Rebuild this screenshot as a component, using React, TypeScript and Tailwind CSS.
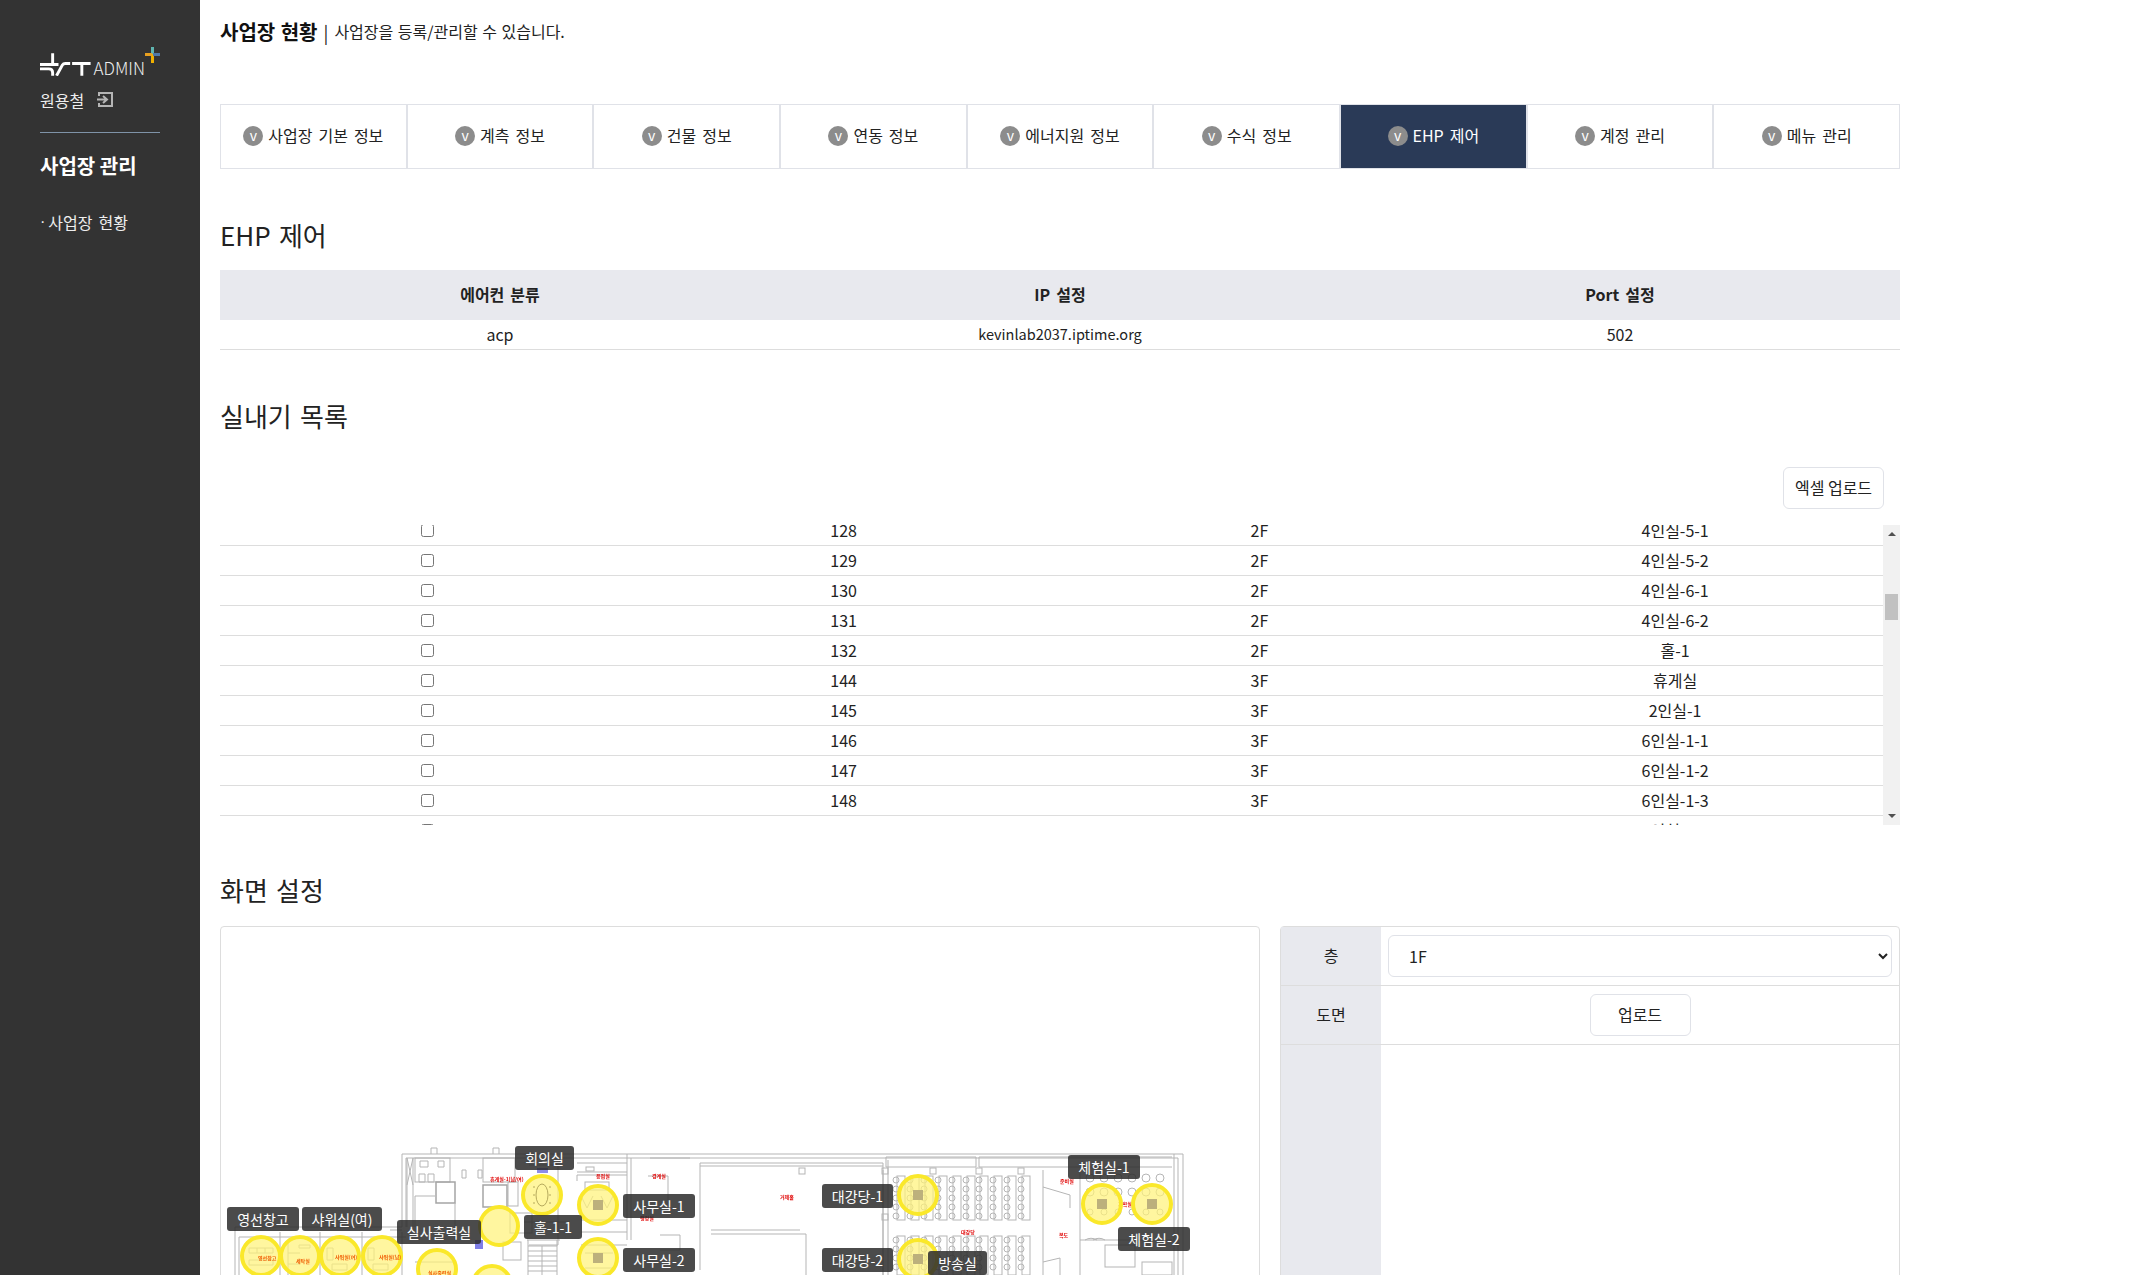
const font = "font-['Noto_Sans_CJK_KR',sans-serif]";

const tabs = ["사업장 기본 정보", "계측 정보", "건물 정보", "연동 정보", "에너지원 정보", "수식 정보", "EHP 제어", "계정 관리", "메뉴 관리"];

const rows = [
  ["128", "2F", "4인실-5-1"],
  ["129", "2F", "4인실-5-2"],
  ["130", "2F", "4인실-6-1"],
  ["131", "2F", "4인실-6-2"],
  ["132", "2F", "홀-1"],
  ["144", "3F", "휴게실"],
  ["145", "3F", "2인실-1"],
  ["146", "3F", "6인실-1-1"],
  ["147", "3F", "6인실-1-2"],
  ["148", "3F", "6인실-1-3"],
  ["149", "3F", "6인실-2-1"],
];

// plan coordinates are page pixels, the svg viewBox starts at the panel corner
const labels = [
  { t: "영선창고", x: 227, y: 1208, w: 72 },
  { t: "샤워실(여)", x: 302, y: 1208, w: 80 },
  { t: "실사출력실", x: 397, y: 1221, w: 84 },
  { t: "회의실", x: 515, y: 1147, w: 59 },
  { t: "홀-1-1", x: 524, y: 1216, w: 58 },
  { t: "사무실-1", x: 623, y: 1195, w: 72 },
  { t: "사무실-2", x: 623, y: 1249, w: 72 },
  { t: "대강당-1", x: 822, y: 1185, w: 71 },
  { t: "대강당-2", x: 822, y: 1249, w: 71 },
  { t: "방송실", x: 928, y: 1252, w: 59 },
  { t: "체험실-1", x: 1068, y: 1156, w: 72 },
  { t: "체험실-2", x: 1118, y: 1228, w: 72 },
];

const spots = [
  [542, 1195], [598, 1205], [499, 1226], [598, 1258], [261, 1256], [300, 1256], [340, 1256], [382, 1256],
  [437, 1269], [492, 1285], [918, 1195], [918, 1259], [1102, 1204], [1152, 1204],
];
const squares = [[598, 1205], [598, 1258], [918, 1195], [918, 1259], [1102, 1204], [1152, 1204]];

const seatCols = [897, 911, 925, 939, 953, 967, 980, 994, 1008, 1022];

function Plan() {
  return (
    <svg className="absolute left-0 top-0 blur-[0.4px]" width="1040" height="348" viewBox="221 927 1040 348" fill="none">
      <g stroke="#b5b5b5" strokeWidth="1">
        {/* outer walls */}
        <path d="M402 1227V1154H1183V1275M406 1227V1158H1178V1275M235 1275V1227H402M239 1275V1237H406" />
        <path d="M1174 1154V1275M627 1154V1240M631 1158V1240M390 1230H402" />
        {/* wc and stairs block, left */}
        <path d="M407 1158V1227M413 1158V1227M407 1158L413 1185M413 1158L407 1185" />
        <rect x="415" y="1158" width="35" height="24" />
        <rect x="436" y="1182" width="19" height="21" strokeWidth="1.5" stroke="#a5a5a5" />
        <path d="M415 1196H435M415 1196V1227M455 1203V1240M431 1154v-6h6v6M493 1154v-6h6v6" />
        <path d="M420 1161h8v6h-8zM438 1161h6v6h-6zM419 1174h6v8h-6zM428 1174h6v8h-6z" />
        <rect x="483" y="1158" width="32" height="24" />
        <rect x="483" y="1185" width="24" height="22" strokeWidth="1.5" stroke="#a5a5a5" />
        <rect x="508" y="1182" width="10" height="24" />
        <path d="M462 1170v8h4v-8zM478 1170v8h4v-8z" />
        <path d="M529 1165H558V1245H529M524 1222H570M527 1240H560" />
        <path d="M528 1240V1275M557 1240V1275M542 1246V1275M528 1246H557M528 1251H557M528 1256H557M528 1261H557M528 1266H557M528 1271H557" />
        <rect x="503" y="1242" width="18" height="18" />
        <rect x="510" y="1213" width="22" height="20" />
        {/* office */}
        <path d="M577 1163H627M577 1172H627M577 1181V1175H627M581 1220H627M581 1232H627M581 1245H627" />
        <rect x="585" y="1182" width="24" height="8" />
        <rect x="586" y="1167" width="8" height="4" />
        <path d="M581 1196l6 12 6-12M601 1196l6 12 6-12M585 1253h28M585 1268h28" />
        <path d="M650 1158H690M648 1176H668V1200M660 1235H680V1250M660 1250H680" />
        {/* lecture hall */}
        <path d="M700 1163H883V1300M700 1166H883M700 1163V1270M711 1230H800M711 1234H806V1275M883 1170V1275M888 1160V1275" />
        <path d="M886 1157H976M979 1157H1172M886 1167H976M979 1167H1172M886 1157V1167M976 1157V1167M979 1157V1167" />
        <rect x="799" y="1168" width="6" height="6" />
        <rect x="882" y="1168" width="6" height="6" />
        <rect x="882" y="1214" width="6" height="6" />
        <rect x="930" y="1168" width="6" height="6" />
        <rect x="976" y="1168" width="6" height="6" />
        <rect x="1018" y="1168" width="6" height="6" />
        <path d="M1043 1170V1275M1080 1170V1275M1043 1187L1070 1195V1208M1080 1240H1172M1043 1262L1060 1258V1275" />
        <path d="M1085 1240a12 12 0 0 1 12 0M1105 1240a12 12 0 0 0-12 0" />
        <rect x="1105" y="1245" width="30" height="22" />
        <rect x="1142" y="1262" width="30" height="13" />
        {seatCols.map((x) => (
          <g key={x}>
            <rect x={x} y="1176" width="8" height="44" />
            <rect x={x} y="1236" width="8" height="39" />
            {[1180, 1189, 1198, 1207, 1216, 1240, 1249, 1258, 1267].map((y) => (
              <circle key={y} cx={x - 1} cy={y} r="3" />
            ))}
          </g>
        ))}
        {[1090, 1104, 1118, 1132, 1146, 1160].map((x) => (
          <g key={x}>
            <circle cx={x} cy="1178" r="4" />
            <circle cx={x} cy="1192" r="4" />
            <circle cx={x} cy="1212" r="3" />
          </g>
        ))}
        {/* lower left rooms */}
        <path d="M280 1232V1275M320 1232V1275M362 1232V1275M402 1232V1275M415 1262H455" />
        <path d="M249 1248h24v5h-24zM249 1260h24v5h-24zM257 1248v5M265 1248v5M299 1245h11v3h-11zM288 1240v35M288 1253h12M288 1264h12" />
        <path d="M327 1248h6v12h-6zM332 1264h15v6h-15zM368 1248h6v12h-6zM373 1264h15v6h-15z" />
      </g>
      <rect x="537" y="1168" width="11" height="5" fill="#5c5ce0" opacity="0.7" />
      <rect x="475" y="1240" width="8" height="9" fill="#5c5ce0" opacity="0.8" />
      <g fill="#e00000" fontSize="5" fontWeight="700">
        <text x="490" y="1181">휴게실-1(남/여)</text>
        <text x="596" y="1178">응접실</text>
        <text x="652" y="1178">경계실</text>
        <text x="780" y="1199">거제홀</text>
        <text x="961" y="1234">대강당</text>
        <text x="1060" y="1183">준비실</text>
        <text x="1059" y="1237">복도</text>
        <text x="1118" y="1206">기획실</text>
        <text x="640" y="1220">행정실</text>
      </g>
      {spots.map(([x, y]) => (
        <circle key={`${x}-${y}`} cx={x} cy={y} r="19" fill="#fff27a" fillOpacity="0.72" stroke="#fae82a" strokeWidth="4" />
      ))}
      {squares.map(([x, y]) => (
        <rect key={`${x}-${y}`} x={x - 5} y={y - 5} width="10" height="10" fill="#bcb07c" />
      ))}
      <g stroke="#b5a95c" strokeWidth="1">
        <ellipse cx="542" cy="1195" rx="6" ry="11" />
        <path d="M533 1187h2M533 1195h2M533 1203h2M549 1187h2M549 1195h2M549 1203h2" />
      </g>
      <g fill="#f05a00" fontSize="5" fontWeight="700">
        <text x="258" y="1260">영선창고</text>
        <text x="296" y="1263">세탁실</text>
        <text x="335" y="1259">샤워실(여)</text>
        <text x="379" y="1259">샤워실(남)</text>
        <text x="428" y="1275">실사출력실</text>
      </g>
    </svg>
  );
}

function Heading({ children, className }: { children: React.ReactNode; className: string }) {
  return <h2 className={`text-[26px] leading-[32px] text-[#222] ${className}`}>{children}</h2>;
}

export default function App() {
  return (
    <div className={`flex h-[1275px] w-[2134px] overflow-hidden bg-white text-[#222] [word-spacing:0.15em] ${font}`}>
      <aside className="flex w-[200px] shrink-0 flex-col bg-[#333333] px-10 pt-[47px] text-white">
        <div className="flex h-[29px] items-end">
          <svg width="54" height="24" viewBox="0 0 54 24" fill="none" stroke="#fff" strokeWidth="3">
            <path d="M0 12.5H19M13 1V12.5M0 17H9Q13 17 13 21V24M17 24L23 13Q24 11.5 26 11.5H31M33 11.5H52M43 11.5V24" />
          </svg>
          <span className="-mb-[2px] ml-[1px] text-[17px] font-light leading-[20px] text-[#eee]">ADMIN</span>
          <svg className="mb-[13px] shrink-0" width="15" height="16" viewBox="0 0 15 16" strokeWidth="3" fill="none">
            <path d="M7.5 0V7" stroke="#5fb5b0" />
            <path d="M7.5 7V16" stroke="#f0b000" />
            <path d="M0 7.5H7" stroke="#e8a020" />
            <path d="M8 7.5H15" stroke="#4f78a8" />
          </svg>
        </div>
        <div className="mt-[12px] flex h-[24px] items-center gap-[13px] pb-[1px] text-[16px] text-[#eee]">
          원용철
          <svg width="16" height="15" viewBox="0 0 16 15" fill="none" stroke="#b5b5b5" strokeWidth="2">
            <path d="M2 4V1H15V14H2V11M0 7.5H9M6 4l4 3.5-4 3.5" />
          </svg>
        </div>
        <div className="mt-[20px] h-px w-[120px] bg-[#7f93a8]" />
        <div className="mt-[19px] text-[20px] font-bold leading-[28px] [word-spacing:0]">사업장 관리</div>
        <div className="mt-[30px] flex text-[16px] leading-[24px] text-[#eee]">
          <span className="mr-[3px] font-['Liberation_Sans',sans-serif]">·</span>
          사업장 현황
        </div>
      </aside>

      <main className="w-[1680px] shrink-0 pl-[20px] box-content">
        <div className="flex h-[63px] items-start pt-[18px] leading-[28px] [word-spacing:0.06em]">
          <span className="text-[20px] font-bold text-[#111]">사업장 현황</span>
          <span className="ml-[6px] text-[18px]">|</span>
          <span className="ml-[6px] text-[16px] leading-[26px]">사업장을 등록/관리할 수 있습니다.</span>
        </div>

        <div className="mt-[41px] flex h-[65px] border border-[#e0e2e8]">
          {tabs.map((t) => {
            const active = t === "EHP 제어";
            return (
              <div
                key={t}
                className={`flex flex-1 items-center justify-center gap-[5px] border-r-2 border-[#e0e2e8] pb-[1px] text-[16px] last:border-r-0 ${
                  active ? "bg-[#2a3a57] text-white border-r-0" : "text-[#222]"
                }`}
              >
                <span className="flex h-[20px] w-[20px] items-center justify-center rounded-full bg-[#8c8c8c] pb-[2px] text-[14px] text-white">
                  v
                </span>
                <span className="pb-[2px]">{t}</span>
              </div>
            );
          })}
        </div>

        <Heading className="mt-[50px]">EHP 제어</Heading>
        <div className="mt-[19px] grid h-[50px] grid-cols-3 items-center bg-[#e8e9ee] pb-[3px] text-center text-[16px] font-bold">
          <div>에어컨 분류</div>
          <div>IP 설정</div>
          <div>Port 설정</div>
        </div>
        <div className="grid h-[30px] grid-cols-3 items-center border-b border-[#dddddd] pb-[2px] text-center text-[16px]">
          <div>acp</div>
          <div className="text-[14.5px]">kevinlab2037.iptime.org</div>
          <div>502</div>
        </div>

        <Heading className="mt-[50px]">실내기 목록</Heading>
        <div className="mt-[35px] flex h-[42px] justify-end pr-[16px]">
          <button className="w-[101px] rounded-[6px] border border-[#e0e2e8] bg-white pb-[2px] text-[16px]">엑셀 업로드</button>
        </div>

        <div className="mt-[16px] flex h-[300px]">
          <div className="flex-1 overflow-hidden">
            <div className="-mt-[9px]">
              {rows.map((r) => (
                <div key={r[0]} className="grid h-[30px] grid-cols-4 items-center border-b border-[#dddddd] pb-[1px] text-center text-[16px]">
                  <div className="flex justify-center pr-[1px]">
                    <input type="checkbox" readOnly className="m-0 h-[13px] w-[13px]" />
                  </div>
                  <div>{r[0]}</div>
                  <div>{r[1]}</div>
                  <div>{r[2]}</div>
                </div>
              ))}
            </div>
          </div>
          <div className="flex w-[17px] flex-col items-center bg-[#f1f1f1]">
            <div className="mt-[7px] h-0 w-0 border-x-[4px] border-b-[4px] border-x-transparent border-b-[#505050]" />
            <div className="mt-[58px] h-[26px] w-[13px] bg-[#c1c1c1]" />
            <div className="mt-auto mb-[7px] h-0 w-0 border-x-[4px] border-t-[4px] border-x-transparent border-t-[#505050]" />
          </div>
        </div>

        <Heading className="mt-[49px]">화면 설정</Heading>
        <div className="mt-[20px] flex items-start gap-[20px]">
          <div className="relative h-[420px] w-[1040px] overflow-hidden rounded-t-[4px] border border-[#dddddd]">
            <Plan />
            {labels.map((l) => (
              <div
                key={l.t}
                className="absolute flex h-[24px] items-center justify-center rounded-[3px] bg-[#2b2b2b]/85 text-[14px] text-white"
                style={{ left: l.x - 221, top: l.y - 928, width: l.w }}
              >
                {l.t}
              </div>
            ))}
          </div>
          <div className="flex h-[420px] w-[620px] flex-col rounded-t-[4px] border border-[#dddddd] text-[16px]">
            <div className="flex h-[59px] border-b border-[#dddddd]">
              <div className="flex w-[100px] items-center justify-center bg-[#e8e9ee] pb-[2px]">층</div>
              <div className="flex flex-1 items-center px-[7px]">
                <select className="h-[42px] w-full rounded-[6px] border border-[#e0e2e8] bg-white pl-[16px] text-[16px]">
                  <option>1F</option>
                </select>
              </div>
            </div>
            <div className="flex h-[59px] border-b border-[#dddddd]">
              <div className="flex w-[100px] items-center justify-center bg-[#e8e9ee] pb-[2px]">도면</div>
              <div className="flex flex-1 items-center justify-center">
                <button className="h-[42px] w-[101px] rounded-[6px] border border-[#e0e2e8] bg-white pb-[2px] text-[16px]">업로드</button>
              </div>
            </div>
            <div className="flex flex-1">
              <div className="w-[100px] bg-[#e8e9ee]" />
              <div className="flex-1" />
            </div>
          </div>
        </div>
      </main>
    </div>
  );
}
